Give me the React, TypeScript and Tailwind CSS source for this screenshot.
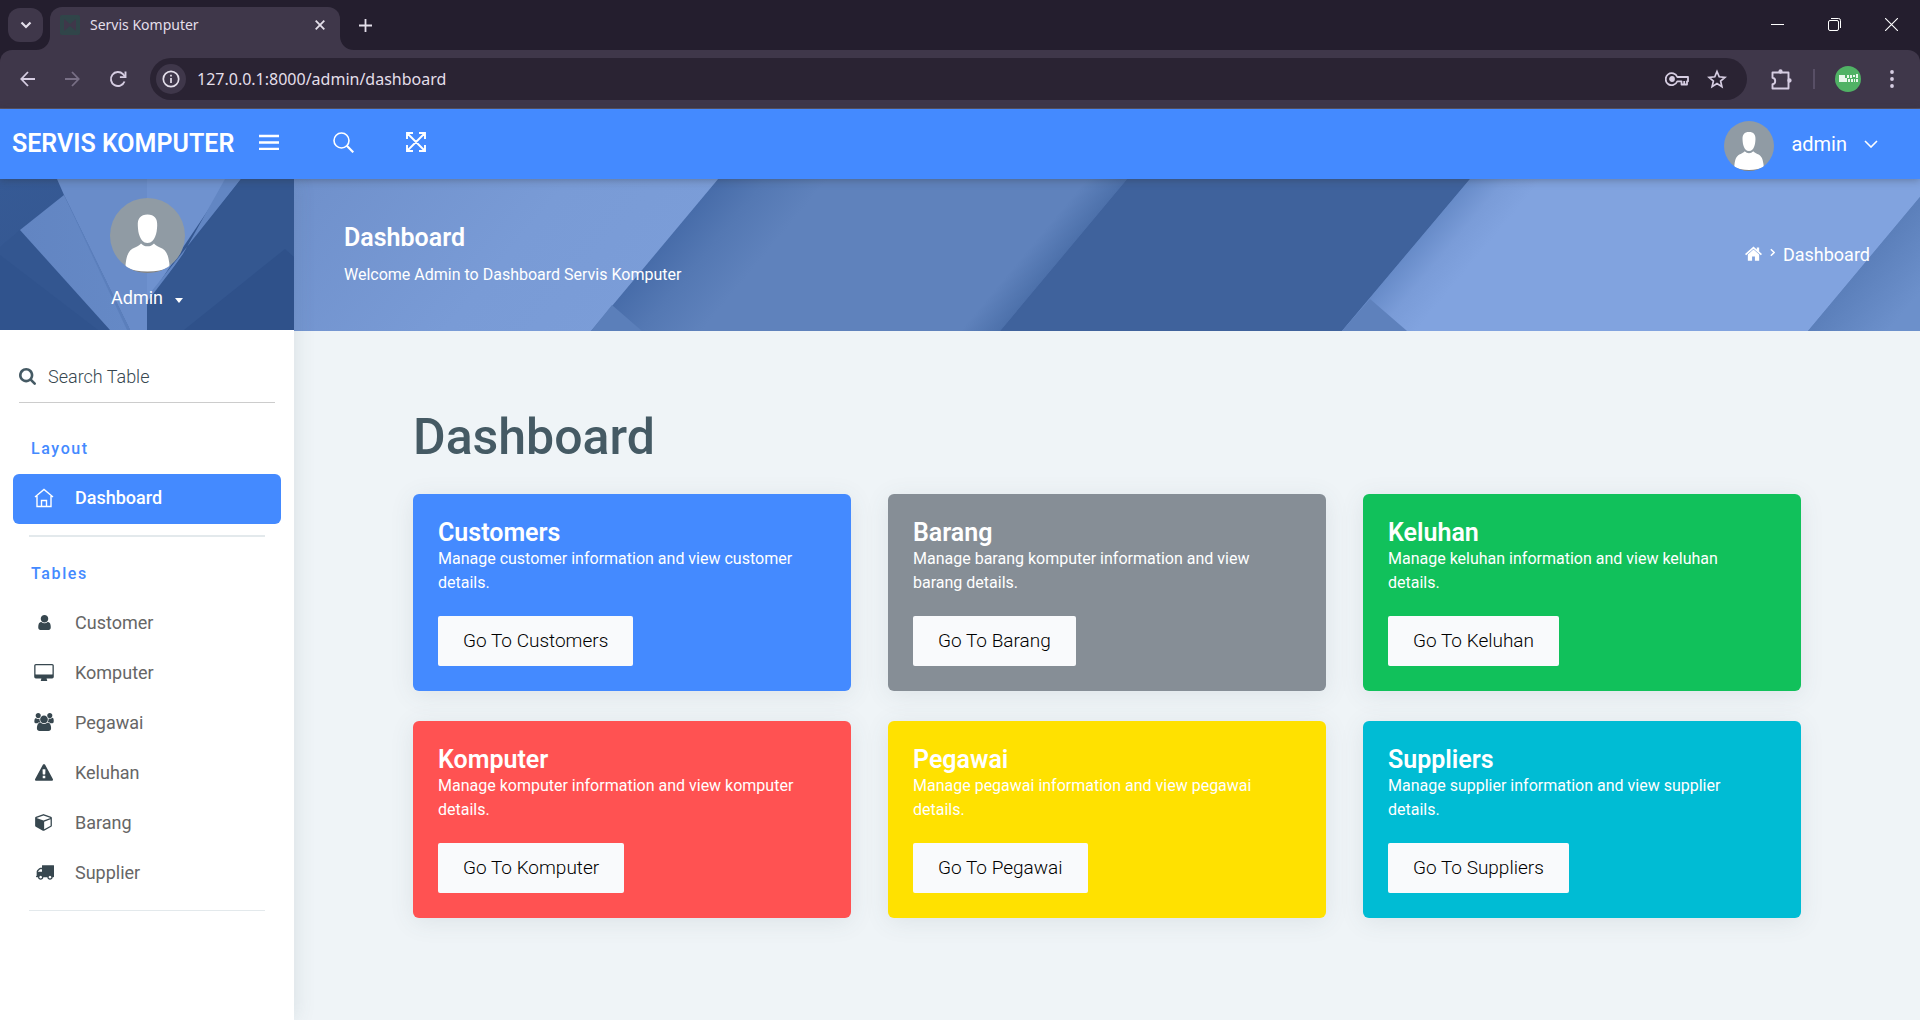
import type { ReactNode } from "react";

function Glyph({ d, box, className }: { d: string; box: string; className: string }) {
  return (
    <svg viewBox={box} className={className} fill="currentColor" aria-hidden="true">
      <path d={d} />
    </svg>
  );
}

const userPath =
  "M1536 1399q0 109-62.5 187t-150.5 78h-854q-88 0-150.5-78t-62.5-187q0-85 8.5-160.5t31.5-152 58.5-131 94-89 134.5-34.5q131 128 313 128t313-128q76 0 134.5 34.5t94 89 58.5 131 31.5 152 8.5 160.5zm-256-887q0 159-112.5 271.5t-271.5 112.5-271.5-112.5-112.5-271.5 112.5-271.5 271.5-112.5 271.5 112.5 112.5 271.5z";
const desktopPath =
  "M1856 992v-832q0-13-9.5-22.5t-22.5-9.5h-1600q-13 0-22.5 9.5t-9.5 22.5v832q0 13 9.5 22.5t22.5 9.5h1600q13 0 22.5-9.5t9.5-22.5zm128-832v1088q0 66-47 113t-113 47h-544q0 37 16 77.5t32 71 16 43.5q0 26-19 45t-45 19h-512q-26 0-45-19t-19-45q0-14 16-44t32-70 16-78h-544q-66 0-113-47t-47-113v-1088q0-66 47-113t113-47h1600q66 0 113 47t47 113z";
const usersPath =
  "M593 896q-162 5-265 128h-134q-82 0-138-40.5t-56-118.5q0-353 124-353 6 0 43.5 21t97.5 42.5 119 21.5q67 0 133-23-5 37-5 66 0 159 93 291zm1071 637q0 120-73 189.5t-194 69.5h-874q-121 0-194-69.5t-73-189.5q0-53 3.5-103.5t14-109 26.5-108.5 43-97.5 62-81 85.5-53.5 111.5-20q10 0 43 21.5t73 48 107 48 135 21.5 135-21.5 107-48 73-48 43-21.5q61 0 111.5 20t85.5 53.5 62 81 43 97.5 26.5 108.5 14 109 3.5 103.5zm-1024-1277q0 106-75 181t-181 75-181-75-75-181 75-181 181-75 181 75 75 181zm704 384q0 159-112.5 271.5t-271.5 112.5-271.5-112.5-112.5-271.5 112.5-271.5 271.5-112.5 271.5 112.5 112.5 271.5zm576 225q0 78-56 118.5t-138 40.5h-134q-103-123-265-128 93-132 93-291 0-29-5-66 66 23 133 23 59 0 119-21.5t97.5-42.5 43.5-21q124 0 124 353zm-128-609q0 106-75 181t-181 75-181-75-75-181 75-181 181-75 181 75 75 181z";
const warningPath =
  "M1024 1375v-190q0-14-9.5-23.5t-22.5-9.5h-192q-13 0-22.5 9.5t-9.5 23.5v190q0 14 9.5 23.5t22.5 9.5h192q13 0 22.5-9.5t9.5-23.5zm-2-374l18-459q0-12-10-19-13-11-24-11h-220q-11 0-24 11-10 7-10 21l17 457q0 10 10 16.5t24 6.5h185q14 0 23.5-6.5t10.5-16.5zm-14-934l768 1408q35 63-2 126-17 29-46.5 46t-63.5 17h-1536q-34 0-63.5-17t-46.5-46q-37-63-2-126l768-1408q17-31 47-49t65-18 65 18 47 49z";
const cubePath =
  "M896 1629l640-349v-636l-640 233v752zm-64-865l698-254-698-254-698 254zm832-252v768q0 35-18 65t-49 47l-704 384q-28 16-61 16t-61-16l-704-384q-31-17-49-47t-18-65v-768q0-40 23-73t61-47l704-256q22-8 44-8t44 8l704 256q38 14 61 47t23 73z";
const truckPath =
  "M640 1408q0-52-38-90t-90-38-90 38-38 90 38 90 90 38 90-38 38-90zm-384-512h384v-256h-158q-13 0-22 9l-195 195q-9 9-9 22v30zm1280 512q0-52-38-90t-90-38-90 38-38 90 38 90 90 38 90-38 38-90zm256-1088v1024q0 15-4 26.5t-13.5 18.5-16.5 11.5-23.5 6-22.5 2-25.5 0-22.5-.5q0 106-75 181t-181 75-181-75-75-181h-384q0 106-75 181t-181 75-181-75-75-181h-64q-3 0-22.5.5t-25.5 0-22.5-2-23.5-6-16.5-11.5-13.5-18.5-4-26.5q0-26 19-45t45-19v-320q0-8-.5-35t0-38 2.5-34.5 6.5-37 14-30.5 22.5-30l198-198q19-19 50.5-32t58.5-13h160v-192q0-26 19-45t45-19h1024q26 0 45 19t19 45z";
const searchPath =
  "M1216 832q0-185-131.5-316.5t-316.5-131.5-316.5 131.5-131.5 316.5 131.5 316.5 316.5 131.5 316.5-131.5 131.5-316.5zm512 832q0 52-38 90t-90 38q-54 0-90-38l-343-342q-179 124-399 124-143 0-273.5-55.5t-225-150-150-225-55.5-273.5 55.5-273.5 150-225 225-150 273.5-55.5 273.5 55.5 225 150 150 225 55.5 273.5q0 220-124 399l343 343q37 37 37 90z";

function Avatar({ className }: { className: string }) {
  return (
    <svg viewBox="0 0 75 75" className={className} role="img" aria-label="User avatar">
      <clipPath id="avatarClip">
        <circle cx="37.5" cy="37.5" r="37.5" />
      </clipPath>
      <g clipPath="url(#avatarClip)">
        <rect width="75" height="75" fill="#909ba4" />
        <rect y="72" width="75" height="3" fill="#7d7f83" />
        <path
          d="M37.5 16.500c-7 0-10 4-9.700 11 .2 4 .6 8 2 11 1.500 3.500 3.500 6.500 7.700 6.500s6.200-3 7.700-6.500c1.400-3 1.800-7 2-11 .3-7-2.700-11-9.700-11z"
          fill="#fff"
        />
        <path
          d="M31 45.500c2 2 4 2.800 6.500 2.800s4.500-.8 6.500-2.800c1 1.500 3 2.500 6 4 5.500 2 8 6 9.200 15 .3 2 .3 3.500.3 4.500-6 3-13 4.500-22 4.500s-16-1.500-22-4.500c0-1 0-2.500.3-4.500 1.200-9 3.700-13 9.200-15 3-1.500 5-2.500 6-4z"
          fill="#fff"
        />
      </g>
    </svg>
  );
}

function BrowserChrome() {
  return (
    <div className="shrink-0 bg-[#241e2e] font-['Noto_Sans','Open_Sans',sans-serif] text-[#e4dfea]">
      <div className="flex h-[50px] items-start">
        <button aria-label="Search tabs" className="mt-2 ml-2 flex h-[34px] w-[35px] items-center justify-center rounded-xl bg-[#3f374a]">
          <svg viewBox="0 0 12 8" className="w-3" fill="none" stroke="currentColor" strokeWidth="2.200">
            <path d="M1.500 1.500 6 6l4.500-4.500" />
          </svg>
        </button>
        <svg viewBox="0 0 14 14" className="ml-[-7px] h-[14px] w-[14px] self-end" fill="#3f374a">
          <path d="M14 0v14H0C8 14 14 8 14 0z" />
        </svg>
        <div className="mt-[7px] flex h-[43px] w-[290px] items-center self-end rounded-t-xl bg-[#3f374a] pb-2 pl-[10px]">
          <svg viewBox="0 0 20 20" className="w-5" aria-hidden="true">
            <rect width="20" height="20" rx="2" fill="#304549" />
            <path d="M4 4l6 5 6-5v12l-6-5-6 5z" fill="#3f374a" />
          </svg>
          <span className="ml-[10px] flex-1 text-[14px] leading-5">Servis Komputer</span>
          <button aria-label="Close tab" className="mr-[15px]">
            <svg viewBox="0 0 10 10" className="w-[10px]" stroke="currentColor" strokeWidth="1.800">
              <path d="M.7.7l8.600 8.600M9.300.7.7 9.300" />
            </svg>
          </button>
        </div>
        <svg viewBox="0 0 14 14" className="h-[14px] w-[14px] self-end" fill="#3f374a">
          <path d="M0 0v14h14C6 14 0 8 0 0z" />
        </svg>
        <button aria-label="New tab" className="mt-[19px] ml-[5px]">
          <svg viewBox="0 0 13 13" className="w-[13px]" stroke="currentColor" strokeWidth="1.800">
            <path d="M6.500 0v13M0 6.500h13" />
          </svg>
        </button>
        <div className="mt-[18px] mr-[22px] ml-auto flex gap-11">
          <button aria-label="Minimize">
            <svg viewBox="0 0 13 13" className="w-[13px]" stroke="#fff">
              <path d="M0 6.500h13" />
            </svg>
          </button>
          <button aria-label="Restore">
            <svg viewBox="0 0 13 13" className="w-[13px]" fill="none" stroke="#fff">
              <rect x=".5" y="2.500" width="10" height="10" rx="1.500" />
              <path d="M3 .5h7.500a2 2 0 0 1 2 2V10" />
            </svg>
          </button>
          <button aria-label="Close window">
            <svg viewBox="0 0 13 13" className="w-[13px]" stroke="#fff" strokeWidth="1.100">
              <path d="M0 0l13 13M13 0 0 13" />
            </svg>
          </button>
        </div>
      </div>
      <div className="flex h-[59px] items-center rounded-t-xl border-b border-[#5a5364] bg-[#3f374a]">
        <button aria-label="Back" className="ml-5">
          <svg viewBox="0 0 16 16" className="w-4" fill="none" stroke="#d6cde2" strokeWidth="1.800">
            <path d="M15 8H1.500M8 1 1.300 8 8 15" />
          </svg>
        </button>
        <button aria-label="Forward" className="ml-7">
          <svg viewBox="0 0 16 16" className="w-4" fill="none" stroke="#786f85" strokeWidth="1.800">
            <path d="M1 8h13.500M8 1l6.700 7L8 15" />
          </svg>
        </button>
        <button aria-label="Reload" className="ml-[29px]">
          <svg viewBox="0 0 18 18" className="w-[18px]" fill="none" stroke="#d6cde2" strokeWidth="1.900">
            <path d="M15.500 11.500A7 7 0 1 1 14 4.200l2 2.300" />
            <path d="M16.500 1.500v5.600h-5.600" />
          </svg>
        </button>
        <div className="ml-[23px] flex h-[42px] flex-1 items-center rounded-full bg-[#2a2333]">
          <button aria-label="Site information" className="ml-[6px] flex h-[30px] w-[30px] items-center justify-center rounded-full bg-[#3f374a]">
            <svg viewBox="0 0 18 18" className="w-[18px]" fill="none" stroke="#e4dfea" strokeWidth="1.700">
              <circle cx="9" cy="9" r="7.700" />
              <path d="M9 8v5M9 4.800v1.800" />
            </svg>
          </button>
          <input
            aria-label="Address"
            defaultValue="127.0.0.1:8000/admin/dashboard"
            className="ml-[11px] min-w-0 flex-1 bg-transparent text-[16px] leading-6 outline-none"
          />
          <button aria-label="Saved password" className="mr-[18px]">
            <svg viewBox="0 0 24 14" className="w-6" fill="none" stroke="#d6cde2" strokeWidth="1.800">
              <path d="M12.300 5A6 6 0 1 0 12.300 9.300H16.500v3.200h5.500V9.300h1V5z" strokeLinejoin="round" />
              <circle cx="7" cy="7" r="2" fill="#d6cde2" />
              <path d="M19.200 9v3.500" />
            </svg>
          </button>
          <button aria-label="Bookmark" className="mr-5">
            <svg viewBox="0 0 20 20" className="w-5" fill="none" stroke="#d6cde2" strokeWidth="1.700">
              <path d="M10 2.500l2.200 5.300 5.700.5-4.300 3.700 1.300 5.600-4.900-3-4.900 3 1.300-5.600-4.300-3.700 5.700-.5z" />
            </svg>
          </button>
        </div>
        <button aria-label="Extensions" className="ml-6">
          <svg viewBox="0 0 21 21" className="w-[21px]" fill="none" stroke="#d6cde2" strokeWidth="1.900">
            <path d="M1.500 3.500h16v16h-16v-4.200c3.600-.4 3.600-6.200 0-6.600z" strokeLinejoin="round" />
            <circle cx="9.500" cy="2.500" r="1.200" fill="#d6cde2" />
            <circle cx="18.500" cy="11.500" r="1.200" fill="#d6cde2" />
          </svg>
        </button>
        <span className="ml-[21px] h-5 w-[2px] bg-[#584f66]" />
        <button aria-label="Profile" className="ml-5">
          <svg viewBox="0 0 26 26" className="w-[26px]" fill="#e9f7ec">
            <circle cx="13" cy="13" r="13" fill="#50b265" />
            <path d="M4 9h6v3h2v4H4zM12 9h2v3h-2zM15 9h2v3h-2zM18 9h2v2h-2zM21 8h2v4h-2zM13 13h2v3h-2zM16 13h2v3h-2zM19 13h1v3h-1zM21 13h2v3h-2z" />
          </svg>
        </button>
        <button aria-label="Browser menu" className="mr-[26px] ml-[29px]">
          <svg viewBox="0 0 4 18" className="h-[18px] w-1" fill="#d6cde2">
            <circle cx="2" cy="2" r="1.900" />
            <circle cx="2" cy="9" r="1.900" />
            <circle cx="2" cy="16" r="1.900" />
          </svg>
        </button>
      </div>
    </div>
  );
}

function TopBar() {
  return (
    <header className="relative z-20 flex h-[70px] shrink-0 items-center bg-[#448aff] text-white shadow-[0_1px_8px_rgba(43,43,43,0.35)]">
      <a href="#home" className="ml-3 text-[25px] font-semibold whitespace-nowrap">
        SERVIS KOMPUTER
      </a>
      <div className="flex items-center pb-1">
        <button aria-label="Toggle menu" className="ml-[25px]">
          <svg viewBox="0 0 20 16" className="w-5" stroke="currentColor" strokeWidth="2.400">
            <path d="M0 2h20M0 8.500h20M0 15h20" />
          </svg>
        </button>
        <button aria-label="Search" className="ml-[54px]">
          <svg viewBox="0 0 21 21" className="w-[21px]" fill="none" stroke="currentColor" strokeWidth="1.600">
            <circle cx="8.500" cy="8.500" r="7.500" />
            <path d="M13.800 13.800 20.300 20.300" strokeWidth="2.200" />
          </svg>
        </button>
        <button aria-label="Full screen" className="ml-[52px]">
          <svg viewBox="0 0 20 20" className="w-5" fill="none" stroke="currentColor" strokeWidth="1.900">
            <path d="M1.500 1.500l17 17M18.500 1.500l-17 17M1 7V1h6M13 1h6v6M1 13v6h6M19 13v6h-6" />
          </svg>
        </button>
      </div>
      <button className="mr-[42px] ml-auto flex items-center text-[20px]">
        <Avatar className="mt-1 w-[50px]" />
        <span className="ml-[17px]">admin</span>
        <svg viewBox="0 0 14 8" className="ml-[17px] w-[14px]" fill="none" stroke="currentColor" strokeWidth="1.600">
          <path d="M1 1l6 6 6-6" />
        </svg>
      </button>
    </header>
  );
}

function ProfilePanel() {
  return (
    <div className="relative h-[151px] overflow-hidden bg-[#33568f] text-white">
      <svg viewBox="0 0 294 151" preserveAspectRatio="none" className="absolute inset-0 h-full w-full" aria-hidden="true">
        <defs>
          <linearGradient id="leftWall" x1="0" y1="0" x2="1" y2="1">
            <stop offset="0" stopColor="#365a95" />
            <stop offset="0.6" stopColor="#34568f" />
            <stop offset="1" stopColor="#2e5088" />
          </linearGradient>
          <linearGradient id="blade" x1="0" y1="0" x2="1" y2="0">
            <stop offset="0" stopColor="#6285c2" />
            <stop offset="1" stopColor="#6589c6" />
          </linearGradient>
        </defs>
        <rect width="294" height="151" fill="url(#leftWall)" />
        <path d="M0 68L20 51 110 151H0z" fill="#335690" />
        <path d="M0 76L98 151H0z" fill="#30538d" />
        <path d="M20 51L64 16 130 151H110z" fill="url(#blade)" />
        <path d="M57 0h92v151h-19L64 16z" fill="#698cc9" />
        <path d="M64 16L130 151h-3z" fill="#5b7fbc" />
        <path d="M147 0h82L147 122z" fill="#6f92cf" />
        <path d="M241 0h-16l-42 75-36 52v-9z" fill="#6286c3" />
        <path d="M241 0h53v151H147v-28z" fill="#345790" />
        <path d="M285 70l9 8v73H184z" fill="#2f518a" />
      </svg>
      <div className="relative flex flex-col items-center pt-[19px]">
        <Avatar className="w-[75px]" />
        <button className="mt-[11px] flex items-center gap-3 text-[18px] leading-7">
          Admin
          <svg viewBox="0 0 8 5" className="mt-1 w-2" fill="currentColor" aria-hidden="true">
            <path d="M0 0h8L4 5z" />
          </svg>
        </button>
      </div>
    </div>
  );
}

const tables: { label: string; icon: ReactNode }[] = [
  { label: "Customer", icon: <Glyph d={userPath} box="256 128 1280 1536" className="h-[15px] w-[13px]" /> },
  { label: "Komputer", icon: <Glyph d={desktopPath} box="64 0 1920 1664" className="h-[17px] w-5" /> },
  { label: "Pegawai", icon: <Glyph d={usersPath} box="0 0 1920 1792" className="h-[18px] w-5" /> },
  { label: "Keluhan", icon: <Glyph d={warningPath} box="0 0 1792 1664" className="h-[17px] w-[18px]" /> },
  { label: "Barang", icon: <Glyph d={cubePath} box="0 118 1664 1690" className="mr-[2px] h-[17px] w-[17px]" /> },
  { label: "Supplier", icon: <Glyph d={truckPath} box="64 256 1728 1408" className="ml-[2px] h-[15px] w-[18px]" /> },
];

function Sidebar() {
  return (
    <aside className="relative z-10 w-[294px] shrink-0 bg-white shadow-[1px_0_20px_rgba(69,90,100,0.12)]">
      <ProfilePanel />
      <div className="mx-[19px] flex h-[73px] items-center border-b border-[#ccc] pt-5 text-[#455a64]">
        <label htmlFor="table-search" aria-label="Search Table">
          <Glyph d={searchPath} box="64 128 1664 1664" className="h-[17px] w-[17px]" />
        </label>
        <input
          id="table-search"
          placeholder="Search Table"
          className="ml-3 w-full min-w-0 bg-transparent text-[18px] font-light outline-none placeholder:text-[#37474f]"
        />
      </div>
      <nav className="px-[13px]">
        <h2 className="pt-8 pl-[18px] text-[16px] leading-7 font-medium tracking-widest text-[#448aff]">Layout</h2>
        <a href="#dashboard" className="mt-[11px] flex h-[50px] items-center rounded-md bg-[#448aff] pb-[3px] text-[18px] font-medium text-white">
          <span className="ml-[21px] flex w-5 justify-center">
            <svg viewBox="0 0 20 20" className="w-5" fill="none" stroke="currentColor" strokeWidth="1.400">
              <path d="M1 9l9-7.500L19 9M3 8v10.500h14V8M7.500 18.500v-6h5v6" />
            </svg>
          </span>
          <span className="ml-[21px]">Dashboard</span>
        </a>
        <hr className="mx-4 mt-[11px] border-t-2 border-[#e3e9ec]" />
        <h2 className="pt-[23px] pl-[18px] text-[16px] leading-7 font-medium tracking-widest text-[#448aff]">Tables</h2>
        <ul className="mt-[10px]">
          {tables.map((t) => (
            <li key={t.label}>
              <a href={"#" + t.label.toLowerCase()} className="flex h-[50px] items-center pb-[2px] text-[18px] text-[#666]">
                <span className="ml-[21px] flex w-5 justify-center text-[#37474f]">{t.icon}</span>
                <span className="ml-[21px]">{t.label}</span>
              </a>
            </li>
          ))}
        </ul>
        <hr className="mx-4 mt-3 border-t border-[#e3e9ec]" />
      </nav>
    </aside>
  );
}

function Banner() {
  return (
    <div className="relative h-[152px] overflow-hidden bg-[#5f82bc] text-white">
      <svg viewBox="0 0 1626 152" preserveAspectRatio="none" className="absolute inset-0 h-full w-full" aria-hidden="true">
        <defs>
          <linearGradient id="lightLeft" x1="0" y1="0" x2="1" y2="0.3">
            <stop offset="0" stopColor="#6f90cb" />
            <stop offset="0.6" stopColor="#799bd6" />
            <stop offset="1" stopColor="#7b9dd8" />
          </linearGradient>
          <linearGradient id="mid" gradientUnits="userSpaceOnUse" x1="360" y1="76" x2="602" y2="278">
            <stop offset="0" stopColor="#476ca9" />
            <stop offset="0.12" stopColor="#5478b3" />
            <stop offset="0.27" stopColor="#5f82bc" />
            <stop offset="0.9" stopColor="#5f82bc" />
            <stop offset="1" stopColor="#4c70aa" />
          </linearGradient>
          <linearGradient id="lightRight" gradientUnits="userSpaceOnUse" x1="1112" y1="76" x2="1155" y2="112">
            <stop offset="0" stopColor="#678bc8" />
            <stop offset="0.5" stopColor="#7a9cd8" />
            <stop offset="1" stopColor="#81a3df" />
          </linearGradient>
          <linearGradient id="farRight" gradientUnits="userSpaceOnUse" x1="1568" y1="86" x2="1616" y2="126">
            <stop offset="0" stopColor="#5b7fba" />
            <stop offset="1" stopColor="#6c90cb" />
          </linearGradient>
        </defs>
        <path d="M424 0H833L706 152H297z" fill="url(#mid)" />
        <path d="M0 0H424L297 152H0z" fill="url(#lightLeft)" />
        <path d="M318 126L348 152H297z" fill="#5b7fba" />
        <path d="M833 0H1176L1048 152H706z" fill="#3f629c" />
        <path d="M1176 0H1626V18L1514 152H1048z" fill="url(#lightRight)" />
        <path d="M1076 120L1113 152H1048z" fill="#5e81bc" />
        <path d="M1626 18V152H1514z" fill="url(#farRight)" />
      </svg>
      <div className="relative flex h-full items-center justify-between px-[50px] pb-[2px]">
        <div>
          <h2 className="text-[25px] leading-8 font-semibold">Dashboard</h2>
          <p className="mt-[9px] text-[16px] leading-6">Welcome Admin to Dashboard Servis Komputer</p>
        </div>
        <nav aria-label="Breadcrumb" className="flex items-center text-[18px]">
          <a href="#home" aria-label="Home">
            <svg viewBox="0 0 18 16" className="w-[17px]" fill="currentColor">
              <path d="M9 .5 0 8.500l1.200 1.300L9 3l7.800 6.800L18 8.500l-3-2.700V1.500h-2.500v2.100z" />
              <path d="M9 3.600 3 8.900V15.500h4.500v-4.500h3v4.500H15V8.900z" />
            </svg>
          </a>
          <svg viewBox="0 0 6 10" className="mx-2 mb-1 h-[9px] w-[5px]" fill="none" stroke="currentColor" strokeWidth="1.800">
            <path d="M1 1l4 4-4 4" />
          </svg>
          <a href="#dashboard">Dashboard</a>
        </nav>
      </div>
    </div>
  );
}

const cards = [
  { title: "Customers", text: "Manage customer information and view customer details.", color: "bg-[#448aff]" },
  { title: "Barang", text: "Manage barang komputer information and view barang details.", color: "bg-[#868e96]" },
  { title: "Keluhan", text: "Manage keluhan information and view keluhan details.", color: "bg-[#11c15b]" },
  { title: "Komputer", text: "Manage komputer information and view komputer details.", color: "bg-[#ff5252]" },
  { title: "Pegawai", text: "Manage pegawai information and view pegawai details.", color: "bg-[#ffe100]" },
  { title: "Suppliers", text: "Manage supplier information and view supplier details.", color: "bg-[#00bcd4]" },
];

export default function App() {
  return (
    <div className="flex min-h-screen flex-col bg-[#eff4f7] font-[Roboto,sans-serif]">
      <BrowserChrome />
      <TopBar />
      <div className="flex flex-1">
        <Sidebar />
        <main className="min-w-0 flex-1">
          <Banner />
          <section className="px-[119px] pt-[76px] pb-10">
            <h1 className="mb-[27px] text-[50px] leading-[60px] font-medium text-[#455a64]">Dashboard</h1>
            <div className="grid grid-cols-3 gap-x-[37px] gap-y-[30px]">
              {cards.map((c) => (
                <article key={c.title} className={"rounded-md p-[25px] text-white shadow-[0_4px_25px_rgba(69,90,100,0.1)] " + c.color}>
                  <h3 className="text-[25px] leading-7 font-semibold">{c.title}</h3>
                  <p className="mb-[21px] pr-4 text-[16px] leading-6">{c.text}</p>
                  <a
                    href={"#" + c.title.toLowerCase()}
                    className="inline-flex h-[50px] items-center rounded-xs bg-[#f9fafc] px-[25px] align-top text-[19px] font-light text-black"
                  >
                    Go To {c.title}
                  </a>
                </article>
              ))}
            </div>
          </section>
        </main>
      </div>
    </div>
  );
}
